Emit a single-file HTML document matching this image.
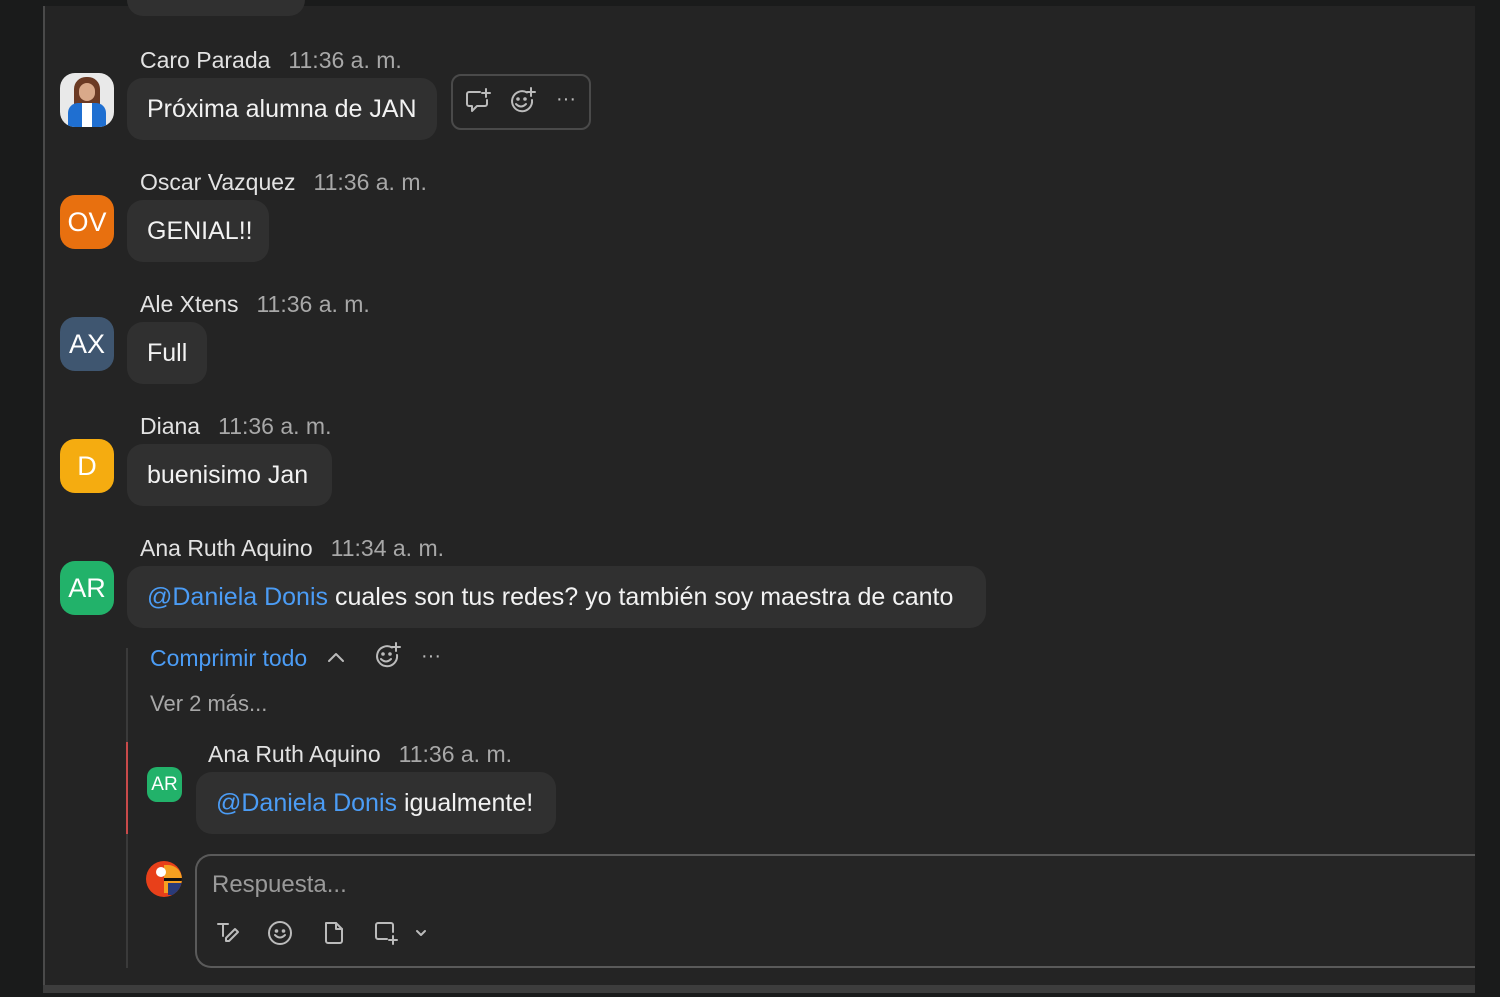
<!DOCTYPE html>
<html><head><meta charset="utf-8"><style>
*{margin:0;padding:0;box-sizing:border-box}
body{width:1500px;height:997px;background:#1a1b1b;font-family:"Liberation Sans",sans-serif;position:relative;overflow:hidden}
.panel{position:absolute;left:43px;top:6px;width:1432px;height:979px;background:#242424;border-left:2px solid #4a4a4a}
.bar{position:absolute;left:43px;top:985px;width:1432px;height:8px;background:#3d3d3d}
.a{position:absolute}
.name{position:absolute;font-size:23px;color:#e2e2e2;white-space:nowrap}
.name span{color:#a8a8a8;margin-left:18px}
.bub{position:absolute;background:#303030;border-radius:16px;height:62px;font-size:25px;color:#f2f2f2;padding:0 20px;line-height:62px;white-space:nowrap}
.av{position:absolute;width:54px;height:54px;border-radius:15px;color:#fff;font-size:27px;text-align:center;line-height:54px}
.m{color:#4b9cf5}
svg{position:absolute;fill:none;stroke:#bbb;stroke-width:2;stroke-linecap:round;stroke-linejoin:round}
</style></head><body>
<div class="panel"></div>
<div class="bar"></div>
<div class="bub" style="left:127px;top:-46px;width:178px"></div>

<div class="name" style="left:140px;top:47px">Caro Parada<span>11:36 a. m.</span></div>
<div class="av" style="left:60px;top:73px;background:#e9e9e9;overflow:hidden"><div style="position:absolute;left:14px;top:4px;width:26px;height:48px;background:#6b3a24;border-radius:12px 12px 4px 4px"></div><div style="position:absolute;left:19px;top:10px;width:16px;height:18px;background:#d9a98a;border-radius:8px"></div><div style="position:absolute;left:8px;top:30px;width:38px;height:26px;background:#1f6fd1;border-radius:10px 10px 0 0"></div><div style="position:absolute;left:22px;top:30px;width:10px;height:24px;background:#fff"></div></div>
<div class="bub" style="left:127px;top:78px;width:310px">Próxima alumna de JAN</div>
<div class="a" style="left:451px;top:74px;width:140px;height:56px;border:2px solid #4a4a4a;border-radius:10px"></div>
<svg style="left:464px;top:87px" width="30" height="30" viewBox="0 0 30 30"><path d="M16 5H5a2 2 0 0 0-2 2v10a2 2 0 0 0 2 2h3v5l5-5h8a2 2 0 0 0 2-2v-4"/><path d="M22 2v8M18 6h8"/></svg>
<svg style="left:508px;top:87px" width="30" height="30" viewBox="0 0 30 30"><path d="M19 5.5A10 10 0 1 0 24 13"/><circle cx="10" cy="12" r="0.8" fill="#bbb"/><circle cx="17" cy="12" r="0.8" fill="#bbb"/><path d="M8 17q5 5 10 0"/><path d="M23 1v8M19 5h8"/></svg>
<div class="a" style="left:556px;top:88px;font-size:20px;color:#bbb">···</div>

<div class="name" style="left:140px;top:169px">Oscar Vazquez<span>11:36 a. m.</span></div>
<div class="av" style="left:60px;top:195px;background:#e8700f">OV</div>
<div class="bub" style="left:127px;top:200px;width:142px">GENIAL!!</div>

<div class="name" style="left:140px;top:291px">Ale Xtens<span>11:36 a. m.</span></div>
<div class="av" style="left:60px;top:317px;background:#3f5670">AX</div>
<div class="bub" style="left:127px;top:322px;width:80px">Full</div>

<div class="name" style="left:140px;top:413px">Diana<span>11:36 a. m.</span></div>
<div class="av" style="left:60px;top:439px;background:#f5ac10">D</div>
<div class="bub" style="left:127px;top:444px;width:205px">buenisimo Jan</div>

<div class="name" style="left:140px;top:535px">Ana Ruth Aquino<span>11:34 a. m.</span></div>
<div class="av" style="left:60px;top:561px;background:#22b26a">AR</div>
<div class="bub" style="left:127px;top:566px;width:859px"><span class="m">@Daniela Donis</span> cuales son tus redes? yo también soy maestra de canto</div>

<div class="a" style="left:126px;top:648px;width:2px;height:320px;background:#3a3a3a"></div>
<div class="a" style="left:126px;top:742px;width:2px;height:92px;background:#c94a4a"></div>
<div class="a" style="left:150px;top:645px;font-size:23px;color:#4b9cf5">Comprimir todo</div>
<svg style="left:326px;top:650px" width="20" height="16" viewBox="0 0 20 16"><path d="M3 11l7-7 7 7"/></svg>
<svg style="left:373px;top:642px" width="30" height="30" viewBox="0 0 30 30"><path d="M19 5.5A10 10 0 1 0 24 13"/><circle cx="10" cy="12" r="0.8" fill="#bbb"/><circle cx="17" cy="12" r="0.8" fill="#bbb"/><path d="M8 17q5 5 10 0"/><path d="M23 1v8M19 5h8"/></svg>
<div class="a" style="left:421px;top:645px;font-size:20px;color:#bbb">···</div>
<div class="a" style="left:150px;top:691px;font-size:22px;color:#a8a8a8">Ver 2 más...</div>

<div class="name" style="left:208px;top:741px">Ana Ruth Aquino<span>11:36 a. m.</span></div>
<div class="av" style="left:147px;top:767px;width:35px;height:35px;border-radius:10px;line-height:35px;font-size:19px;background:#22b26a">AR</div>
<div class="bub" style="left:196px;top:772px;width:360px"><span class="m">@Daniela Donis</span> igualmente!</div>

<div class="a" style="left:146px;top:861px;width:36px;height:36px;border-radius:50%;background:#e8401a;overflow:hidden"><div style="position:absolute;left:18px;top:4px;width:18px;height:28px;background:#f5a020;border-radius:0 14px 14px 0"></div><div style="position:absolute;left:10px;top:6px;width:10px;height:10px;background:#fff;border-radius:50%"></div><div style="position:absolute;left:18px;top:17px;width:18px;height:3px;background:#111"></div><div style="position:absolute;left:22px;top:22px;width:14px;height:12px;background:#2a3b7a"></div></div>
<div class="a" style="left:195px;top:854px;width:1280px;height:114px;border:2px solid #5a5a5a;border-right:none;border-radius:16px 0 0 16px;background:#252525"></div>
<div class="a" style="left:212px;top:871px;font-size:24px;color:#9a9a9a">Respuesta...</div>
<svg style="left:215px;top:920px" width="26" height="26" viewBox="0 0 26 26"><path d="M3 4h10M8 4v12"/><path d="M20 9l3 3-9 9H11v-3z"/></svg>
<svg style="left:267px;top:920px" width="26" height="26" viewBox="0 0 26 26"><circle cx="13" cy="13" r="11"/><circle cx="9.5" cy="11" r="0.8" fill="#bbb"/><circle cx="16.5" cy="11" r="0.8" fill="#bbb"/><path d="M8 15q5 5 10 0"/></svg>
<svg style="left:321px;top:920px" width="26" height="26" viewBox="0 0 26 26"><path d="M5 3h10l6 6v12a2 2 0 0 1-2 2H7a2 2 0 0 1-2-2z"/><path d="M15 3v6h6"/></svg>
<svg style="left:373px;top:920px" width="30" height="26" viewBox="0 0 30 26"><path d="M20 12V5a2 2 0 0 0-2-2H5a2 2 0 0 0-2 2v12a2 2 0 0 0 2 2h9"/><path d="M20 16v8M16 20h8"/></svg>
<svg style="left:413px;top:926px" width="16" height="14" viewBox="0 0 16 14"><path d="M4 5l4 4 4-4"/></svg>
</body></html>
